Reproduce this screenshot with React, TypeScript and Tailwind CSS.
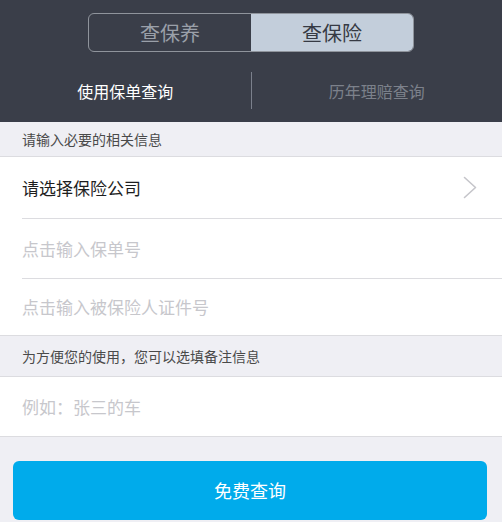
const font = { fontFamily: '"Noto Sans CJK SC", "Noto Sans", sans-serif' };

function Chevron() {
  return (
    <svg width="14" height="23" viewBox="0 0 14 23" fill="none">
      <polyline points="1.5,1.5 12.5,11.5 1.5,21.5" stroke="#c5c5ca" strokeWidth="1.6" strokeLinecap="round" strokeLinejoin="round" />
    </svg>
  );
}

export default function App() {
  return (
    <div className="w-[502px] h-[522px] bg-[#efeff4] overflow-hidden" style={font}>
      {/* Header */}
      <div className="bg-[#3a3e49] h-[122px] pt-[13px]">
        <div className="mx-auto w-[326px] h-[39px] flex rounded-[6px] border border-[#8f949c] overflow-hidden">
          <div className="flex-1 flex items-center justify-center text-[20px] text-[#9aa0a9]">查保养</div>
          <div className="flex-1 flex items-center justify-center text-[20px] text-[#363a44] bg-[#c3cedb]">查保险</div>
        </div>
        <div className="flex items-center h-[70px] pt-[7px]">
          <div className="flex-1 text-center text-[16px] text-white">使用保单查询</div>
          <div className="w-px h-[37px] bg-[#7b808c]" />
          <div className="flex-1 text-center text-[16px] text-[#7c818b]">历年理赔查询</div>
        </div>
      </div>

      {/* Section 1 */}
      <div className="h-[35px] flex items-center px-[22px] text-[14px] text-[#4a4a4a] border-b border-[#dcdce0]">
        请输入必要的相关信息
      </div>
      <div className="bg-white">
        <div className="h-[61px] flex items-center justify-between pl-[22px] pr-[25px]">
          <span className="text-[17px] text-[#1e1e1e]">请选择保险公司</span>
          <Chevron />
        </div>
        <div className="ml-[22px] border-t border-[#dcdce0]" />
        <div className="h-[59px] flex items-center px-[22px] text-[17px] text-[#c7c7cc]">点击输入保单号</div>
        <div className="ml-[22px] border-t border-[#dcdce0]" />
        <div className="h-[56px] flex items-center px-[22px] text-[17px] text-[#c7c7cc]">点击输入被保险人证件号</div>
      </div>

      {/* Section 2 */}
      <div className="h-[42px] flex items-center px-[22px] text-[14px] text-[#4a4a4a] border-t border-b border-[#dcdce0]">
        为方便您的使用，您可以选填备注信息
      </div>
      <div className="bg-white h-[60px] flex items-center px-[22px] text-[17px] text-[#c7c7cc] border-b border-[#dcdce0]">
        例如：张三的车
      </div>

      <div className="pl-[13px] pr-[15px] pt-[24px]">
        <button className="w-full h-[59px] rounded-[6px] bg-[#00abeb] text-white text-[18px]">免费查询</button>
      </div>
    </div>
  );
}
